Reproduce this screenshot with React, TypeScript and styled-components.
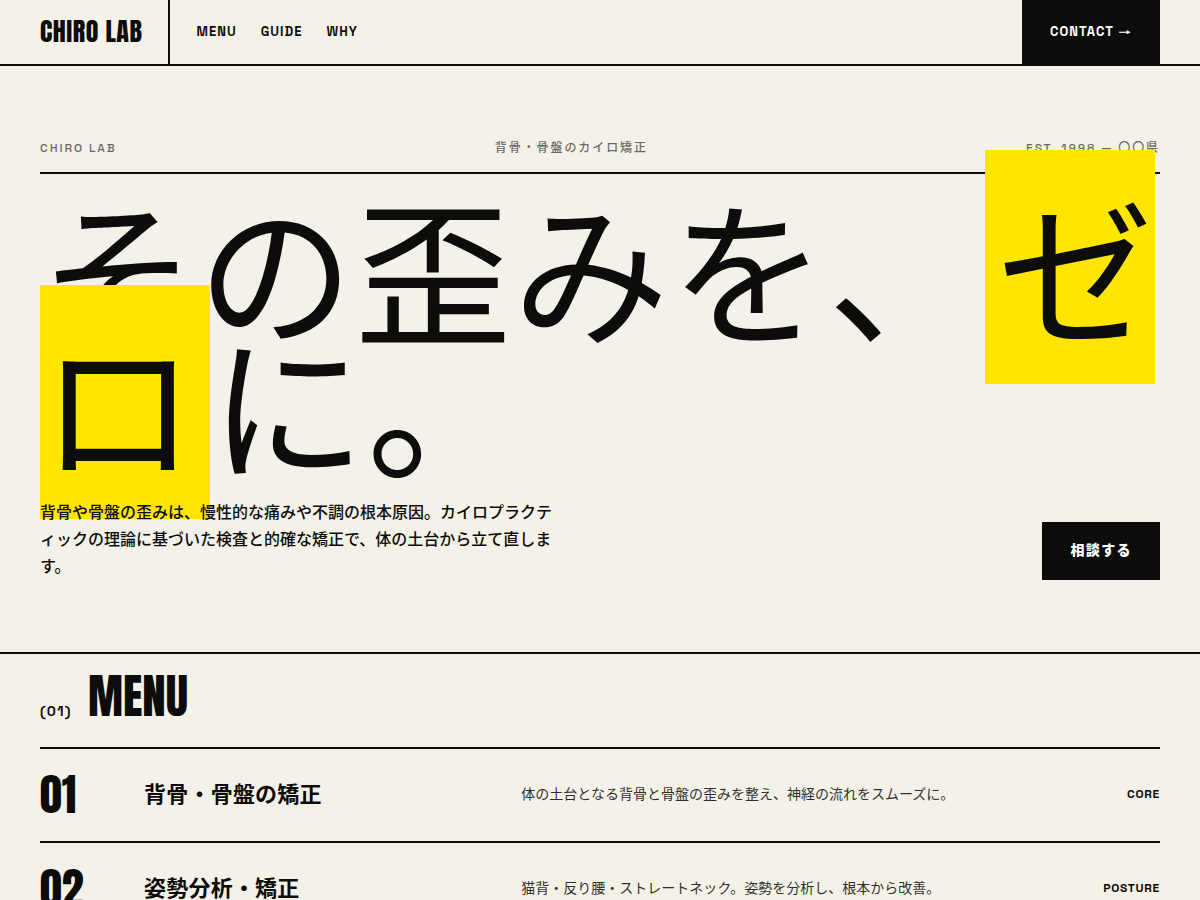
import React from "react";
import styled, { createGlobalStyle, ThemeProvider } from "styled-components";

const theme = {
  ink: "#0c0c0a",
  paper: "#f4f1e8",
  yellow: "#ffe600",
  white: "#ffffff",
  display: `"Anton", "Noto Sans CJK JP", sans-serif`,
  text: `"Space Grotesk", "Noto Sans CJK JP", sans-serif`,
  arrow: `"Zen Kaku Gothic New", "Noto Sans CJK JP", sans-serif`,
};
type Theme = typeof theme;
type T = { theme: Theme };

const GlobalStyle = createGlobalStyle`
  *, *::before, *::after { box-sizing: border-box; }
  body {
    margin: 0;
    background: ${theme.paper};
    color: ${theme.ink};
    font-family: ${theme.text};
    font-size: 16px;
    line-height: 1.6;
  }
  h1, h2, h3, p, ul, ol { margin: 0; padding: 0; }
  ul, ol { list-style: none; }
  a { color: inherit; text-decoration: none; }
`;

const Header = styled.header`
  display: flex;
  align-items: stretch;
  height: 66px;
  padding: 0 40px;
  border-bottom: 2px solid ${(p: T) => p.theme.ink};
`;

const Logo = styled.a`
  display: flex;
  align-items: center;
  padding-right: 26px;
  border-right: 2px solid ${(p: T) => p.theme.ink};
  font-family: ${(p: T) => p.theme.display};
  font-size: 26px;
  letter-spacing: 0.02em;
`;

const Nav = styled.nav`
  display: flex;
  align-items: center;
  gap: 24px;
  padding-left: 26px;
`;

const NavLink = styled.a`
  font-size: 13px;
  font-weight: 700;
  letter-spacing: 0.08em;
`;

const ContactLink = styled.a`
  display: flex;
  align-items: center;
  margin-left: auto;
  padding: 0 28px;
  background: ${(p: T) => p.theme.ink};
  color: ${(p: T) => p.theme.white};
  font-size: 13px;
  font-weight: 700;
  letter-spacing: 0.08em;
  white-space: pre;
`;

const Arrow = styled.span`
  font-family: ${(p: T) => p.theme.arrow};
`;

const Hero = styled.section`
  padding: 72px 40px;
  border-bottom: 2px solid ${(p: T) => p.theme.ink};
`;

const HeroMeta = styled.div`
  display: flex;
  justify-content: space-between;
  padding: 1px 0 14px;
  border-bottom: 2px solid ${(p: T) => p.theme.ink};
  font-size: 12px;
  font-weight: 500;
  letter-spacing: 0.16em;
`;

const MetaItem = styled.span`
  opacity: 0.6;
`;

const HeroTitle = styled.h1`
  position: relative;
  margin: 26px 0 29px;
  font-family: ${(p: T) => p.theme.display};
  font-size: 13vw;
  font-weight: 400;
  line-height: 135px;
  letter-spacing: 0.01em;
`;

const Marker = styled.span`
  padding: 0 12px;
  background: ${(p: T) => p.theme.yellow};
`;

const HeroFoot = styled.div`
  position: relative;
  display: flex;
  justify-content: space-between;
  align-items: flex-end;
  gap: 32px;
`;

const Lead = styled.p`
  max-width: 520px;
  font-size: 16px;
  font-weight: 500;
  line-height: 27px;
`;

const ConsultButton = styled.button`
  padding: 17px 28px 19px;
  border: 0;
  background: ${(p: T) => p.theme.ink};
  color: ${(p: T) => p.theme.white};
  font-family: inherit;
  font-size: 14px;
  font-weight: 900;
  line-height: 22px;
  letter-spacing: 0.1em;
  cursor: pointer;
`;

const MenuSection = styled.section`
  padding: 0 40px;
`;

const SectionHead = styled.div`
  display: flex;
  align-items: baseline;
  gap: 16px;
  padding: 19px 0 26px;
  border-bottom: 2px solid ${(p: T) => p.theme.ink};
`;

const SectionNumber = styled.span`
  font-size: 14px;
  font-weight: 700;
  line-height: 20px;
  letter-spacing: 0.1em;
`;

const SectionTitle = styled.h2`
  font-family: ${(p: T) => p.theme.display};
  font-size: 47px;
  font-weight: 400;
  line-height: 46px;
`;

const MenuRow = styled.li`
  display: grid;
  grid-template-columns: 80px 1fr 1.4fr 120px;
  align-items: center;
  gap: 24px;
  padding: 23px 0 25px;
  border-bottom: 2px solid ${(p: T) => p.theme.ink};
`;

const RowNumber = styled.span`
  font-family: ${(p: T) => p.theme.display};
  font-size: 44px;
  line-height: 44px;
`;

const RowTitle = styled.h3`
  font-size: 22px;
  font-weight: 700;
  letter-spacing: 0.01em;
`;

const RowText = styled.p`
  font-size: 14px;
  opacity: 0.85;
`;

const RowTag = styled.span`
  font-size: 12px;
  font-weight: 700;
  letter-spacing: 0.06em;
  text-align: right;
`;

const links = ["MENU", "GUIDE", "WHY"];

const treatments = [
  { title: "背骨・骨盤の矯正", text: "体の土台となる背骨と骨盤の歪みを整え、神経の流れをスムーズに。", tag: "CORE" },
  { title: "姿勢分析・矯正", text: "猫背・反り腰・ストレートネック。姿勢を分析し、根本から改善。", tag: "POSTURE" },
];

export default function App() {
  return (
    <ThemeProvider theme={theme}>
      <GlobalStyle />
      <Header>
        <Logo href="#top">CHIRO LAB</Logo>
        <Nav>
          {links.map((label) => (
            <NavLink key={label} href={`#${label.toLowerCase()}`}>{label}</NavLink>
          ))}
        </Nav>
        <ContactLink href="#contact">CONTACT <Arrow>→</Arrow></ContactLink>
      </Header>
      <main lang="ja">
        <Hero id="top">
          <HeroMeta>
            <MetaItem>CHIRO LAB</MetaItem>
            <MetaItem>背骨・骨盤のカイロ矯正</MetaItem>
            <MetaItem>EST. 1998 — 〇〇県</MetaItem>
          </HeroMeta>
          <HeroTitle>その歪みを、<Marker>ゼロ</Marker>に。</HeroTitle>
          <HeroFoot>
            <Lead>背骨や骨盤の歪みは、慢性的な痛みや不調の根本原因。カイロプラクティックの理論に基づいた検査と的確な矯正で、体の土台から立て直します。</Lead>
            <ConsultButton type="button">相談する</ConsultButton>
          </HeroFoot>
        </Hero>
        <MenuSection id="menu">
          <SectionHead>
            <SectionNumber>(01)</SectionNumber>
            <SectionTitle>MENU</SectionTitle>
          </SectionHead>
          <ol>
            {treatments.map((item, i) => (
              <MenuRow key={item.tag}>
                <RowNumber>{String(i + 1).padStart(2, "0")}</RowNumber>
                <RowTitle>{item.title}</RowTitle>
                <RowText>{item.text}</RowText>
                <RowTag>{item.tag}</RowTag>
              </MenuRow>
            ))}
          </ol>
        </MenuSection>
      </main>
    </ThemeProvider>
  );
}
